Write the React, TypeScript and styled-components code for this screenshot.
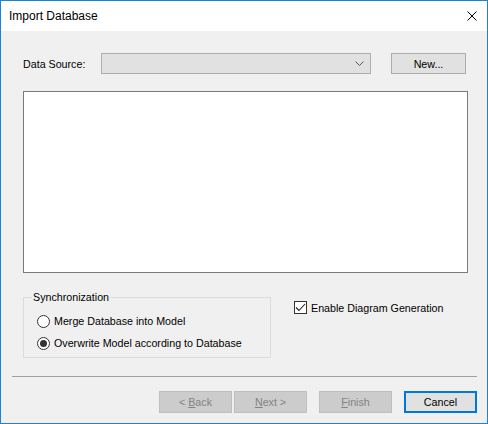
import React from 'react';
import styled, {createGlobalStyle} from 'styled-components';

const GlobalStyle = createGlobalStyle`
    html, body {
        margin: 0;
        padding: 0;
        background: #fff;
    }

    body {
        font-family: "Liberation Sans", Arial, sans-serif;
    }
`;

const App: React.FC = () => {
    return (
        <>
            <GlobalStyle/>
            <Window>
                <TitleBar>
                    <Title>Import Database</Title>
                    <CloseButton>
                        <svg width="10" height="10" viewBox="0 0 10 10">
                            <path d="M0.5 0.5 L9.5 9.5 M9.5 0.5 L0.5 9.5" stroke="#000" strokeWidth="1" fill="none"/>
                        </svg>
                    </CloseButton>
                </TitleBar>

                <Client>
                    <SourceRow>
                        <Label>Data Source:</Label>
                        <ComboBox>
                            <svg width="9" height="5" viewBox="0 0 9 5">
                                <path d="M0.5 0.5 L4.5 4.5 L8.5 0.5" stroke="#555" strokeWidth="1" fill="none"/>
                            </svg>
                        </ComboBox>
                        <Button>New...</Button>
                    </SourceRow>

                    <ListBox/>

                    <OptionsRow>
                        <GroupBox>
                            <GroupCaption>Synchronization</GroupCaption>
                            <RadioRow>
                                <Radio $checked={false}/>
                                <span>Merge Database into Model</span>
                            </RadioRow>
                            <RadioRow>
                                <Radio $checked={true}/>
                                <span>Overwrite Model according to Database</span>
                            </RadioRow>
                        </GroupBox>

                        <CheckRow>
                            <CheckBox>
                                <svg width="11" height="11" viewBox="0 0 11 11">
                                    <path d="M1 5.5 L4 8.5 L10 2" stroke="#222" strokeWidth="1.1" fill="none"/>
                                </svg>
                            </CheckBox>
                            <span>Enable Diagram Generation</span>
                        </CheckRow>
                    </OptionsRow>

                    <Separator/>

                    <ButtonBar>
                        <WizardButton disabled><span>&lt; <u>B</u>ack</span></WizardButton>
                        <WizardButton disabled $gap={2}><span><u>N</u>ext &gt;</span></WizardButton>
                        <WizardButton disabled $gap={12}><span><u>F</u>inish</span></WizardButton>
                        <WizardButton $gap={12} $default><span>Cancel</span></WizardButton>
                    </ButtonBar>
                </Client>
            </Window>
        </>
    );
}

export default App;

const Window = styled.div`
    width: 488px;
    height: 424px;
    box-sizing: border-box;
    border: 1px solid #1883d7;
    display: flex;
    flex-direction: column;
    font-size: 10.7px;
    color: #000;
`;

const TitleBar = styled.div`
    height: 30px;
    background: #fff;
    display: flex;
    align-items: center;
    justify-content: space-between;
    padding-left: 8px;
`;

const Title = styled.span`
    font-size: 12px;
`;

const CloseButton = styled.div`
    width: 30px;
    height: 30px;
    display: flex;
    align-items: center;
    justify-content: flex-end;
    box-sizing: border-box;
    margin-right: 10px;
`;

const Client = styled.div`
    flex: 1;
    background: #f0f0f0;
    padding: 0 10px 0 11px;
    display: flex;
    flex-direction: column;
`;

const SourceRow = styled.div`
    display: flex;
    align-items: center;
    height: 21px;
    margin: 22px 0 0 11px;
`;

const Label = styled.span`
    width: 78px;
`;

const ComboBox = styled.div`
    width: 270px;
    height: 21px;
    box-sizing: border-box;
    background: #e1e1e1;
    border: 1px solid #adadad;
    display: flex;
    align-items: center;
    justify-content: flex-end;
    padding-right: 6px;
    margin-right: 20px;
`;

const Button = styled.div`
    width: 75px;
    height: 21px;
    box-sizing: border-box;
    background: #e1e1e1;
    border: 1px solid #adadad;
    display: flex;
    align-items: center;
    justify-content: center;
`;

const ListBox = styled.div`
    width: 445px;
    height: 182px;
    box-sizing: border-box;
    margin: 17px 0 0 11px;
    background: #fff;
    border: 1px solid #7a7a7a;
`;

const OptionsRow = styled.div`
    display: flex;
    align-items: flex-start;
    margin: 24px 0 0 11px;
`;

const GroupBox = styled.div`
    position: relative;
    width: 248px;
    height: 61px;
    box-sizing: border-box;
    border: 1px solid #dcdcdc;
    padding: 12px 0 0 13px;
`;

const GroupCaption = styled.span`
    position: absolute;
    top: -8px;
    left: 8px;
    padding: 0 1px;
    background: #f0f0f0;
    line-height: 14px;
`;

const RadioRow = styled.div`
    display: flex;
    align-items: center;
    height: 22px;
    gap: 4px;
`;

const Radio = styled.span<{ $checked: boolean }>`
    width: 13px;
    height: 13px;
    box-sizing: border-box;
    border-radius: 50%;
    border: 1px solid #333;
    background: #fff;
    display: flex;
    align-items: center;
    justify-content: center;

    &::after {
        content: '';
        display: ${props => props.$checked ? 'block' : 'none'};
        width: 7px;
        height: 7px;
        border-radius: 50%;
        background: #333;
    }
`;

const CheckRow = styled.div`
    display: flex;
    align-items: center;
    gap: 4px;
    margin: 4px 0 0 23px;
`;

const CheckBox = styled.span`
    width: 13px;
    height: 13px;
    box-sizing: border-box;
    border: 1px solid #333;
    background: #fff;
    display: flex;
    align-items: center;
    justify-content: center;
`;

const Separator = styled.div`
    height: 1px;
    background: #a0a0a0;
    margin-top: 18px;
`;

const ButtonBar = styled.div`
    display: flex;
    justify-content: flex-end;
    margin-top: 14px;
`;

const WizardButton = styled.div<{ disabled?: boolean, $gap?: number, $default?: boolean }>`
    width: 73px;
    height: 22px;
    box-sizing: border-box;
    margin-left: ${props => props.$gap ?? 0}px;
    display: flex;
    align-items: center;
    justify-content: center;
    background: ${props => props.disabled ? '#cccccc' : '#e1e1e1'};
    border: ${props => props.$default ? '2px solid #0078d7' : '1px solid #bfbfbf'};
    color: ${props => props.disabled ? '#838383' : '#000'};

    u {
        text-decoration-thickness: 1px;
    }
`;
